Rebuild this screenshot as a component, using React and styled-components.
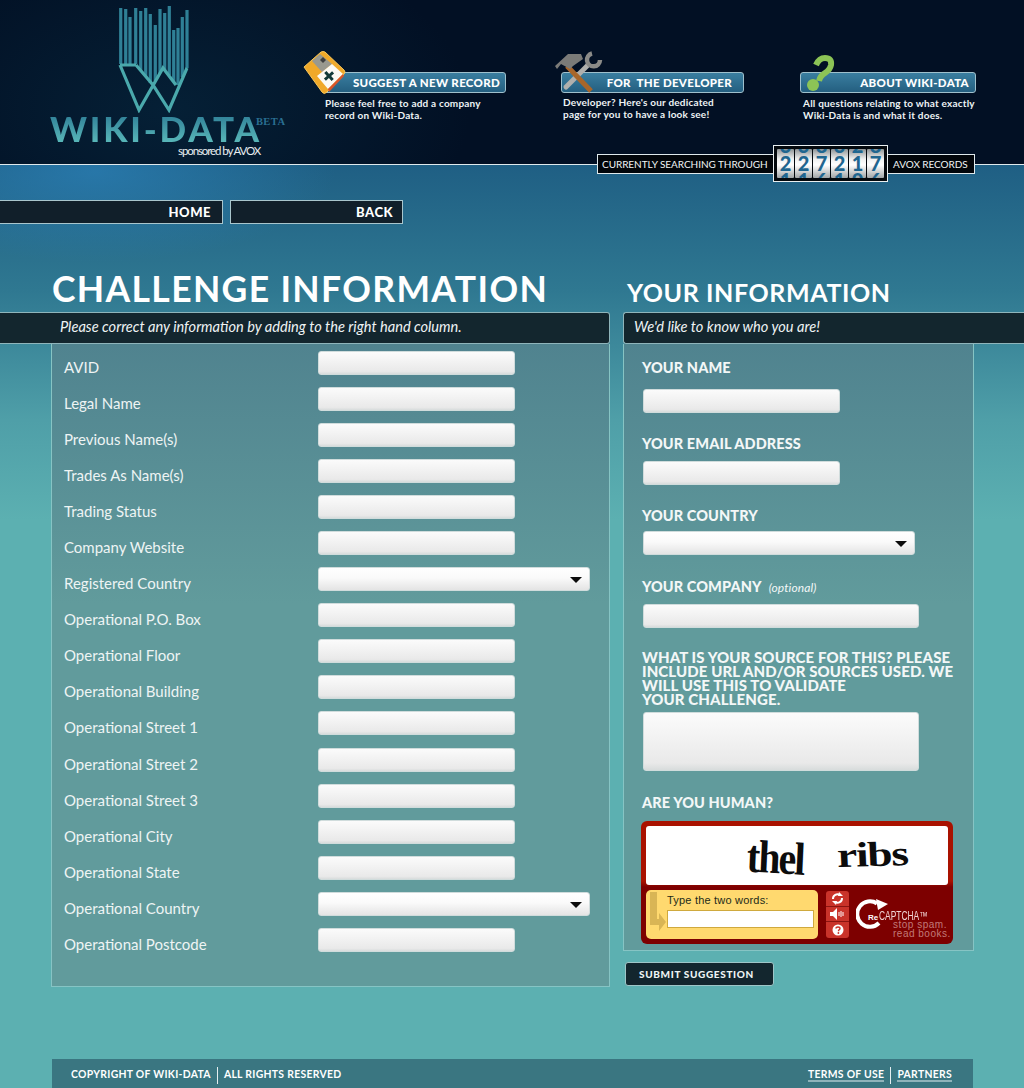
import React from 'react';
import styled, { createGlobalStyle } from 'styled-components';

const GlobalStyle = createGlobalStyle`
  html, body { margin: 0; padding: 0; height: 1088px; overflow: hidden; }
  body { font-family: Lato, "Liberation Sans", sans-serif; color: #fff; }
  * { box-sizing: border-box; }
`;

const Page = styled.div`
  position: relative;
  width: 1024px;
  height: 1088px;
  overflow: hidden;
  background:
    radial-gradient(ellipse 240px 90px at 95px 172px, rgba(42,126,180,.75), rgba(42,126,180,0) 100%),
    linear-gradient(180deg, #1f5f84 165px, #2f7891 290px, #4f9fa8 420px, #5cb0b1 520px);
`;

const Header = styled.header`
  position: relative;
  height: 165px;
  border-bottom: 1px solid #dfe9ec;
  background: radial-gradient(ellipse 300px 180px at 170px 110px, #052036, #021024 100%), #021024;
  background-color: #021024;
  display: flex;
`;

const LogoBlock = styled.div`
  width: 303px;
  flex: none;
  padding-left: 50px;
`;

const LogoMark = styled.svg`
  display: block;
  margin: 5px 0 0 67px;
`;

const LogoName = styled.div`
  display: flex;
  align-items: flex-start;
  margin-top: 1px;
  height: 26px;
`;

const LogoWord = styled.span`
  font-size: 35px;
  line-height: 28px;
  font-weight: 900;
  letter-spacing: 2.8px;
  background: linear-gradient(180deg, #2f7f97, #58b6b8);
  -webkit-background-clip: text;
  background-clip: text;
  color: transparent;
`;

const LogoBeta = styled.span`
  font-family: "Liberation Serif", serif;
  font-weight: bold;
  font-size: 10.5px;
  letter-spacing: .4px;
  color: #2a6f92;
  margin-left: -6px;
  line-height: 16px;
`;

const Sponsor = styled.div`
  font-size: 11.5px;
  letter-spacing: -1.1px;
  margin: 4px 0 0 128px;
  line-height: 14px;
  color: #e8eef0;
  white-space: nowrap;
`;

const Promos = styled.div`
  display: flex;
  flex: 1;
`;

const Promo = styled.div`
  width: ${p => p.$width}px;
  flex: none;
  padding: 72px 0 0 20px;
`;

const PromoBar = styled.div`
  position: relative;
  width: ${p => p.$width}px;
  height: 21px;
  border: 1px solid #9fc0cc;
  border-radius: 3px;
  background: linear-gradient(180deg, #3a7ea0, #245f80);
  font-size: 11.5px;
  font-weight: 900;
  line-height: 20px;
  text-align: right;
  padding-right: ${p => p.$pad}px;
  letter-spacing: .3px;
  white-space: nowrap;
`;

const PromoIcon = styled.svg`
  position: absolute;
  left: ${p => p.$x}px;
  top: ${p => p.$y}px;
`;

const PromoText = styled.p`
  margin: ${p => p.$gap}px 0 0 ${p => p.$indent}px;
  font-size: 10px;
  line-height: 12px;
  font-weight: 700;
  letter-spacing: .2px;
  color: #eef3f5;
  white-space: nowrap;
`;

const CounterStrip = styled.div`
  position: absolute;
  left: 597px;
  top: 145px;
  display: flex;
  align-items: center;
  height: 37px;
`;

const CounterLabel = styled.div`
  height: 20px;
  background: #02060b;
  border: 1px solid #dfe9ec;
  font-size: 10px;
  line-height: 18px;
  letter-spacing: -.05px;
  padding-left: ${p => p.$pad}px;
  width: ${p => p.$width}px;
  white-space: nowrap;
  color: #f0f4f5;
`;

const Counter = styled.div`
  display: flex;
  gap: 1px;
  width: 115px;
  height: 37px;
  padding: 3px;
  background: #04090e;
  border: 1px solid #e8eef0;
  margin: 0 -1px;
  position: relative;
`;

const Tile = styled.div`
  width: 17px;
  height: 29px;
  overflow: hidden;
  border-radius: 1px;
  background: linear-gradient(180deg, #8f9496 0, #f0f1f1 35%, #fff 55%, #a0a5a7 100%);
  color: #1f6690;
  font-weight: 900;
  font-size: 20px;
  line-height: 17.5px;
`;

const TileRoll = styled.div`
  margin-top: -11.75px;
  display: flex;
  flex-direction: column;
  align-items: center;
`;

const Nav = styled.nav`
  display: flex;
  gap: 7px;
  margin-top: 35px;
`;

const NavButton = styled.a`
  display: block;
  width: ${p => p.$width}px;
  height: 24px;
  background: #111f2a;
  border: 1px solid #a9c6cd;
  ${p => p.$first && 'border-left: 0;'}
  text-align: right;
  padding-right: ${p => p.$pad}px;
  font-size: 13px;
  font-weight: 900;
  line-height: 22px;
  letter-spacing: .5px;
`;

const Columns = styled.div`
  display: flex;
  gap: 13px;
  margin-top: 44px;
`;

const LeftColumn = styled.section`
  width: 610px;
  flex: none;
`;

const RightColumn = styled.section`
  flex: 1;
`;

const MainTitle = styled.h1`
  margin: 0 0 0 52px;
  height: 44px;
  font-size: 35.5px;
  font-weight: 700;
  line-height: 42px;
  letter-spacing: 1.35px;
  white-space: nowrap;
`;

const SideTitle = styled.h2`
  margin: 0 0 0 4px;
  height: 44px;
  padding-top: 5px;
  font-size: 25px;
  font-weight: 700;
  line-height: 39px;
  letter-spacing: .6px;
  white-space: nowrap;
`;

const Strap = styled.div`
  height: 32px;
  background: #13262e;
  border: 1px solid #8fb5bb;
  ${p => p.$left ? 'border-left: 0; border-radius: 0 3px 3px 0; padding-left: 60px;' : 'border-right: 0; border-radius: 3px 0 0 3px; padding-left: 10px;'}
  font-style: italic;
  font-size: 14.6px;
  line-height: 28px;
  color: #eef3f4;
`;

const Panel = styled.div`
  background: linear-gradient(180deg, #50838f, #619b9c 260px);
  border: 1px solid #86c4c4;
  border-top: 0;
  display: flow-root;
`;

const LeftPanel = styled(Panel)`
  margin-left: 51px;
  height: 643px;
  padding: 7px 0 0 12px;
`;

const RightPanel = styled(Panel)`
  width: 351px;
  height: 607px;
  padding-left: 19px;
`;

const Row = styled.div`
  display: flex;
  height: 36.06px;
`;

const RowLabel = styled.label`
  width: 254px;
  flex: none;
  font-size: 15px;
  line-height: 32px;
  color: #eef4f4;
`;

const TextField = styled.div`
  width: ${p => p.$width}px;
  height: ${p => p.$height || 24}px;
  border-radius: 3px;
  background: linear-gradient(180deg, #fbfbfb 0, #f3f3f3 40%, #e9e9e9 88%, #d8dcdc 100%);
  border: 1px solid #d0dcdc;
`;

const SelectField = styled(TextField)`
  position: relative;
  background: linear-gradient(180deg, #fff 0, #fafafa 45%, #e4e4e4 100%);
  &::after {
    content: "";
    position: absolute;
    right: ${p => p.$arrow}px;
    top: 9px;
    border-left: 6px solid transparent;
    border-right: 6px solid transparent;
    border-top: 6px solid #0c0c0c;
  }
`;

const FieldLabel = styled.div`
  font-size: 14.5px;
  font-weight: 900;
  line-height: 16px;
  height: 16px;
  margin: ${p => p.$top}px 0 ${p => p.$bottom}px -1px;
  letter-spacing: .1px;
  white-space: nowrap;
  color: #f3f7f7;
`;

const Optional = styled.span`
  font-weight: 400;
  font-style: italic;
  font-size: 12px;
  margin-left: 4px;
`;

const SourceLabel = styled.div`
  margin: 22px 0 6px -1px;
  width: 320px;
  font-size: 15px;
  font-weight: 900;
  line-height: 14px;
  letter-spacing: .1px;
  color: #f3f7f7;
`;

const Captcha = styled.div`
  width: 312px;
  height: 123px;
  margin: 10px 0 0 -2px;
  padding: 5px;
  border-radius: 6px;
  background: linear-gradient(180deg, #a91200, #a91200 60px, #7d0000 66px);
`;

const CaptchaImage = styled.div`
  height: 59px;
  border-radius: 3px;
  background: #fff;
  display: flex;
  align-items: center;
  color: #0c0c0c;
  font-family: "Liberation Serif", serif;
  font-weight: bold;
  padding-left: 101px;
`;

const CaptchaWord = styled.span`
  display: inline-block;
  font-size: ${p => p.$size}px;
  letter-spacing: ${p => p.$spacing}px;
  transform: ${p => p.$transform};
  transform-origin: left center;
  width: ${p => p.$width}px;
  white-space: nowrap;
`;

const CaptchaBottom = styled.div`
  display: flex;
  margin-top: 5px;
`;

const CaptchaEntry = styled.div`
  position: relative;
  width: 172px;
  height: 49px;
  border-radius: 5px;
  background: #ffd96f;
  padding: 4px 4px 0 21px;
  font-family: "Liberation Sans", sans-serif;
  font-size: 11px;
  color: #1d2b18;
`;

const CaptchaArrow = styled.svg`
  position: absolute;
  left: 3px;
  top: 2px;
`;

const CaptchaPrompt = styled.div`
  line-height: 13px;
  letter-spacing: .2px;
`;

const CaptchaInput = styled.div`
  height: 18px;
  margin-top: 3px;
  background: #fff;
  border: 1px solid #cfa93e;
`;

const CaptchaTools = styled.div`
  width: 23px;
  height: 47px;
  margin: 1px 0 0 8px;
  border-radius: 3px;
  background: #c9332a;
  display: flex;
  flex-direction: column;
`;

const ToolCell = styled.div`
  height: 15.6px;
  display: flex;
  align-items: center;
  justify-content: center;
  border-bottom: ${p => p.$last ? '0' : '1px solid #8a1410'};
`;

const CaptchaBrand = styled.div`
  position: relative;
  flex: 1;
`;

const BrandMark = styled.svg`
  position: absolute;
  left: 7px;
  top: 9px;
`;

const BrandName = styled.div`
  position: absolute;
  left: 19px;
  top: 19px;
  font-family: "Liberation Sans", sans-serif;
  line-height: 12px;
  white-space: nowrap;
  color: #f0d4d4;
`;

const BrandRe = styled.b`
  font-size: 8px;
  color: #fff;
  margin-right: 1px;
`;

const BrandCaps = styled.span`
  display: inline-block;
  font-size: 12px;
  transform: scaleX(.7);
  transform-origin: left center;
`;

const BrandTag = styled.div`
  position: absolute;
  left: 44px;
  top: 31px;
  font-family: "Liberation Sans", sans-serif;
  font-size: 10px;
  line-height: 8.5px;
  letter-spacing: .5px;
  color: #c27a78;
  white-space: nowrap;
`;

const SubmitButton = styled.button`
  display: block;
  width: 149px;
  height: 24px;
  margin: 11px 0 0 2px;
  padding: 0 0 0 13px;
  text-align: left;
  font-family: Lato, sans-serif;
  font-size: 10px;
  font-weight: 900;
  letter-spacing: .65px;
  color: #eef4f4;
  background: #13262e;
  border: 1px solid #9fc6c8;
  border-radius: 3px;
`;

const Footer = styled.footer`
  position: absolute;
  left: 52px;
  bottom: 0;
  width: 921px;
  height: 29px;
  background: #3a7681;
  display: flex;
  justify-content: space-between;
  padding: 8px 21px 0 19px;
  font-size: 10.4px;
  font-weight: 700;
  letter-spacing: .3px;
`;

const FooterGroup = styled.div`
  display: flex;
  align-items: flex-start;
  height: 16px;
`;

const FooterItem = styled.span`
  display: block;
  line-height: 14px;
  padding: 0 ${p => p.$pad || 0}px 0 ${p => p.$start || 0}px;
  border-right: ${p => p.$divider ? '1px solid #e5eef0' : '0'};
  height: 17px;
`;

const FooterLink = styled.a`
  display: inline-block;
  line-height: 11px;
  border-bottom: 2px solid #8fb3ba;
`;

const FIELDS = [
  'AVID', 'Legal Name', 'Previous Name(s)', 'Trades As Name(s)', 'Trading Status',
  'Company Website', 'Registered Country', 'Operational P.O. Box', 'Operational Floor',
  'Operational Building', 'Operational Street 1', 'Operational Street 2',
  'Operational Street 3', 'Operational City', 'Operational State',
  'Operational Country', 'Operational Postcode',
];

const SELECTS = ['Registered Country', 'Operational Country'];

const DIGITS = [
  ['3', '2', '1'], ['3', '2', '1'], ['8', '7', '6'],
  ['3', '2', '1'], ['2', '1', '0'], ['8', '7', '6'],
];

// x, top, bottom of each bar of the logo
const BARS = [
  [119.7, 8, 64], [124.7, 9, 64], [129, 17, 64], [134.7, 8, 64], [139.7, 11, 71],
  [144.7, 8, 77], [149.3, 14, 83], [154.3, 25, 81], [159, 9, 73], [163.7, 13, 70],
  [168.3, 6, 75], [172.7, 30, 82], [177, 28, 85], [181.3, 17, 77], [186, 10, 68],
];

const Logo = () => (
  <LogoMark width="76" height="108" viewBox="116 5 76 108">
    <g fill="none" strokeWidth="3.2">
      {BARS.map(([x, top, bottom]) => (
        <path key={x} d={`M${x} ${top}V${bottom}`} stroke="#2f8096" />
      ))}
      <path d="M119 65L138 110L162 68L175 85M135 65L152 85L168 110L186 68M119 65H135" stroke="#4aa9ac" />
    </g>
  </LogoMark>
);

const DiskIcon = () => (
  <PromoIcon $x={-21} $y={-22} width="46" height="44" viewBox="0 0 46 44">
    <path d="M1 16L18 1Q20 0 22 1L41 19Q43 21 41 23L24 41Q21 44 19 41Z" fill="#f0a929" stroke="#f8c65a" strokeWidth="1" />
    <path d="M9 10L17 3L29 13L19 21Z" fill="#99998f" />
    <path d="M17 9L20 6L23 9L20 12Z" fill="#3f4040" />
    <path d="M14 25L29 13L40 23L25 38Z" fill="#fbfaf4" />
    <path d="M25 38L40 23L41 25L26 41Z" fill="#d8562a" />
    <g transform="rotate(-42 26 25)">
      <path d="M24.5 19.5h3v4h4v3h-4v4h-3v-4h-4v-3h4z" fill="#123a38" />
    </g>
  </PromoIcon>
);

const ToolsIcon = () => (
  <PromoIcon $x={-8} $y={-22} width="50" height="44" viewBox="0 0 50 44">
    <path d="M12 36L34 14" fill="none" stroke="#b0b0ad" strokeWidth="5" strokeLinecap="round" />
    <path d="M38 2.5A6.5 6.5 0 1 0 46 9" fill="none" stroke="#8b8b88" strokeWidth="4.5" />
    <path d="M13 15L37 40" fill="none" stroke="#a8662a" strokeWidth="5" />
    <path d="M1 15L14 3H27L29 8L19 15L16 18L7 13L3 18Z" fill="#7b7b78" />
  </PromoIcon>
);

const QuestionIcon = () => (
  <PromoIcon $x={5} $y={-18} width="30" height="38" viewBox="0 0 30 38">
    <path d="M10 10Q13 3 19 3Q26 3 25 10Q24 15 19 18Q14 21 13 26" fill="none" stroke="#8cc456" strokeWidth="6" />
    <circle cx="7" cy="30" r="6" fill="#8cc456" />
  </PromoIcon>
);

const App = () => (
  <Page>
    <GlobalStyle />
    <Header>
      <LogoBlock>
        <Logo />
        <LogoName>
          <LogoWord>WIKI-DATA</LogoWord>
          <LogoBeta>BETA</LogoBeta>
        </LogoName>
        <Sponsor>sponsored by AVOX</Sponsor>
      </LogoBlock>
      <Promos>
        <Promo $width={238}>
          <PromoBar $width={183} $pad={5}>
            <DiskIcon />
            SUGGEST A NEW RECORD
          </PromoBar>
          <PromoText $gap={4} $indent={2}>Please feel free to add a company<br />record on Wiki-Data.</PromoText>
        </Promo>
        <Promo $width={239}>
          <PromoBar $width={183} $pad={11}>
            <ToolsIcon />
            FOR&nbsp; THE DEVELOPER
          </PromoBar>
          <PromoText $gap={3} $indent={2}>Developer? Here's our dedicated<br />page for you to have a look see!</PromoText>
        </Promo>
        <Promo $width={224}>
          <PromoBar $width={176} $pad={6}>
            <QuestionIcon />
            ABOUT WIKI-DATA
          </PromoBar>
          <PromoText $gap={4} $indent={3}>All questions relating to what exactly<br />Wiki-Data is and what it does.</PromoText>
        </Promo>
      </Promos>
      <CounterStrip>
        <CounterLabel $width={177} $pad={4}>CURRENTLY SEARCHING THROUGH</CounterLabel>
        <Counter>
          {DIGITS.map((roll, i) => (
            <Tile key={i}>
              <TileRoll>
                {roll.map((d, j) => <span key={j}>{d}</span>)}
              </TileRoll>
            </Tile>
          ))}
        </Counter>
        <CounterLabel $width={88} $pad={5}>AVOX RECORDS</CounterLabel>
      </CounterStrip>
    </Header>
    <Nav>
      <NavButton $first $width={223} $pad={11}>HOME</NavButton>
      <NavButton $width={173} $pad={9}>BACK</NavButton>
    </Nav>
    <Columns>
      <LeftColumn>
        <MainTitle>CHALLENGE INFORMATION</MainTitle>
        <Strap $left>Please correct any information by adding to the right hand column.</Strap>
        <LeftPanel>
          {FIELDS.map(name => (
            <Row key={name}>
              <RowLabel>{name}</RowLabel>
              {SELECTS.includes(name)
                ? <SelectField $width={272} $arrow={7} />
                : <TextField $width={197} />}
            </Row>
          ))}
        </LeftPanel>
      </LeftColumn>
      <RightColumn>
        <SideTitle>YOUR INFORMATION</SideTitle>
        <Strap>We'd like to know who you are!</Strap>
        <RightPanel>
          <FieldLabel $top={16} $bottom={13}>YOUR NAME</FieldLabel>
          <TextField $width={197} />
          <FieldLabel $top={23} $bottom={9}>YOUR EMAIL ADDRESS</FieldLabel>
          <TextField $width={197} />
          <FieldLabel $top={23} $bottom={7}>YOUR COUNTRY</FieldLabel>
          <SelectField $width={272} $arrow={7} />
          <FieldLabel $top={24} $bottom={9}>YOUR COMPANY <Optional>(optional)</Optional></FieldLabel>
          <TextField $width={276} />
          <SourceLabel>WHAT IS YOUR SOURCE FOR THIS? PLEASE INCLUDE URL AND/OR SOURCES USED. WE WILL USE THIS TO VALIDATE<br />YOUR CHALLENGE.</SourceLabel>
          <TextField $width={276} $height={59} />
          <FieldLabel $top={24} $bottom={0}>ARE YOU HUMAN?</FieldLabel>
          <Captcha>
            <CaptchaImage>
              <CaptchaWord $size={42} $spacing={-2} $width={90} $transform="scale(.95,1.1) rotate(3deg)">thel</CaptchaWord>
              <CaptchaWord $size={35} $spacing={-1} $width={80} $transform="scale(1.3,1) rotate(-2deg)">ribs</CaptchaWord>
            </CaptchaImage>
            <CaptchaBottom>
              <CaptchaEntry>
                <CaptchaArrow width="18" height="42" viewBox="0 0 18 42">
                  <path d="M1 0H8V27H10V21L17 30L10 39V33H1Z" fill="#d9b555" />
                </CaptchaArrow>
                <CaptchaPrompt>Type the two words:</CaptchaPrompt>
                <CaptchaInput />
              </CaptchaEntry>
              <CaptchaTools>
                <ToolCell>
                  <svg width="13" height="13" viewBox="0 0 13 13">
                    <path d="M2 7A4.5 4.5 0 0 1 9 3M11 6A4.5 4.5 0 0 1 4 10" fill="none" stroke="#fff" strokeWidth="2" />
                    <path d="M8 0l4 4H7zM5 13L1 9h5z" fill="#fff" />
                  </svg>
                </ToolCell>
                <ToolCell>
                  <svg width="15" height="12" viewBox="0 0 15 12">
                    <path d="M0 4h3l4-4v12L3 8H0z" fill="#fff" />
                    <path d="M9 4v4M11 3v6M13 4v4" stroke="#fff" strokeWidth="1" />
                  </svg>
                </ToolCell>
                <ToolCell $last>
                  <svg width="12" height="12" viewBox="0 0 12 12">
                    <circle cx="6" cy="6" r="5.5" fill="#fff" />
                    <path d="M4 4.6Q4 3 6 3T8 4.6Q8 5.6 6.6 6.3V7.2" fill="none" stroke="#c9332a" strokeWidth="1.4" />
                    <circle cx="6.4" cy="9" r=".9" fill="#c9332a" />
                  </svg>
                </ToolCell>
              </CaptchaTools>
              <CaptchaBrand>
                <BrandMark width="34" height="31" viewBox="0 0 34 31">
                  <path d="M23 24A12.7 12.7 0 1 1 21 4.5" fill="none" stroke="#fff" strokeWidth="4" />
                  <path d="M20 0L32 5L22 11Z" fill="#fff" />
                </BrandMark>
                <BrandName><BrandRe>Re</BrandRe><BrandCaps>CAPTCHA™</BrandCaps></BrandName>
                <BrandTag>stop spam.<br />read books.</BrandTag>
              </CaptchaBrand>
            </CaptchaBottom>
          </Captcha>
        </RightPanel>
        <SubmitButton>SUBMIT SUGGESTION</SubmitButton>
      </RightColumn>
    </Columns>
    <Footer>
      <FooterGroup>
        <FooterItem $pad={6} $divider>COPYRIGHT OF WIKI-DATA</FooterItem>
        <FooterItem $start={6}>ALL RIGHTS RESERVED</FooterItem>
      </FooterGroup>
      <FooterGroup>
        <FooterItem $pad={6} $divider><FooterLink>TERMS OF USE</FooterLink></FooterItem>
        <FooterItem $start={6}><FooterLink>PARTNERS</FooterLink></FooterItem>
      </FooterGroup>
    </Footer>
  </Page>
);

export default App;
